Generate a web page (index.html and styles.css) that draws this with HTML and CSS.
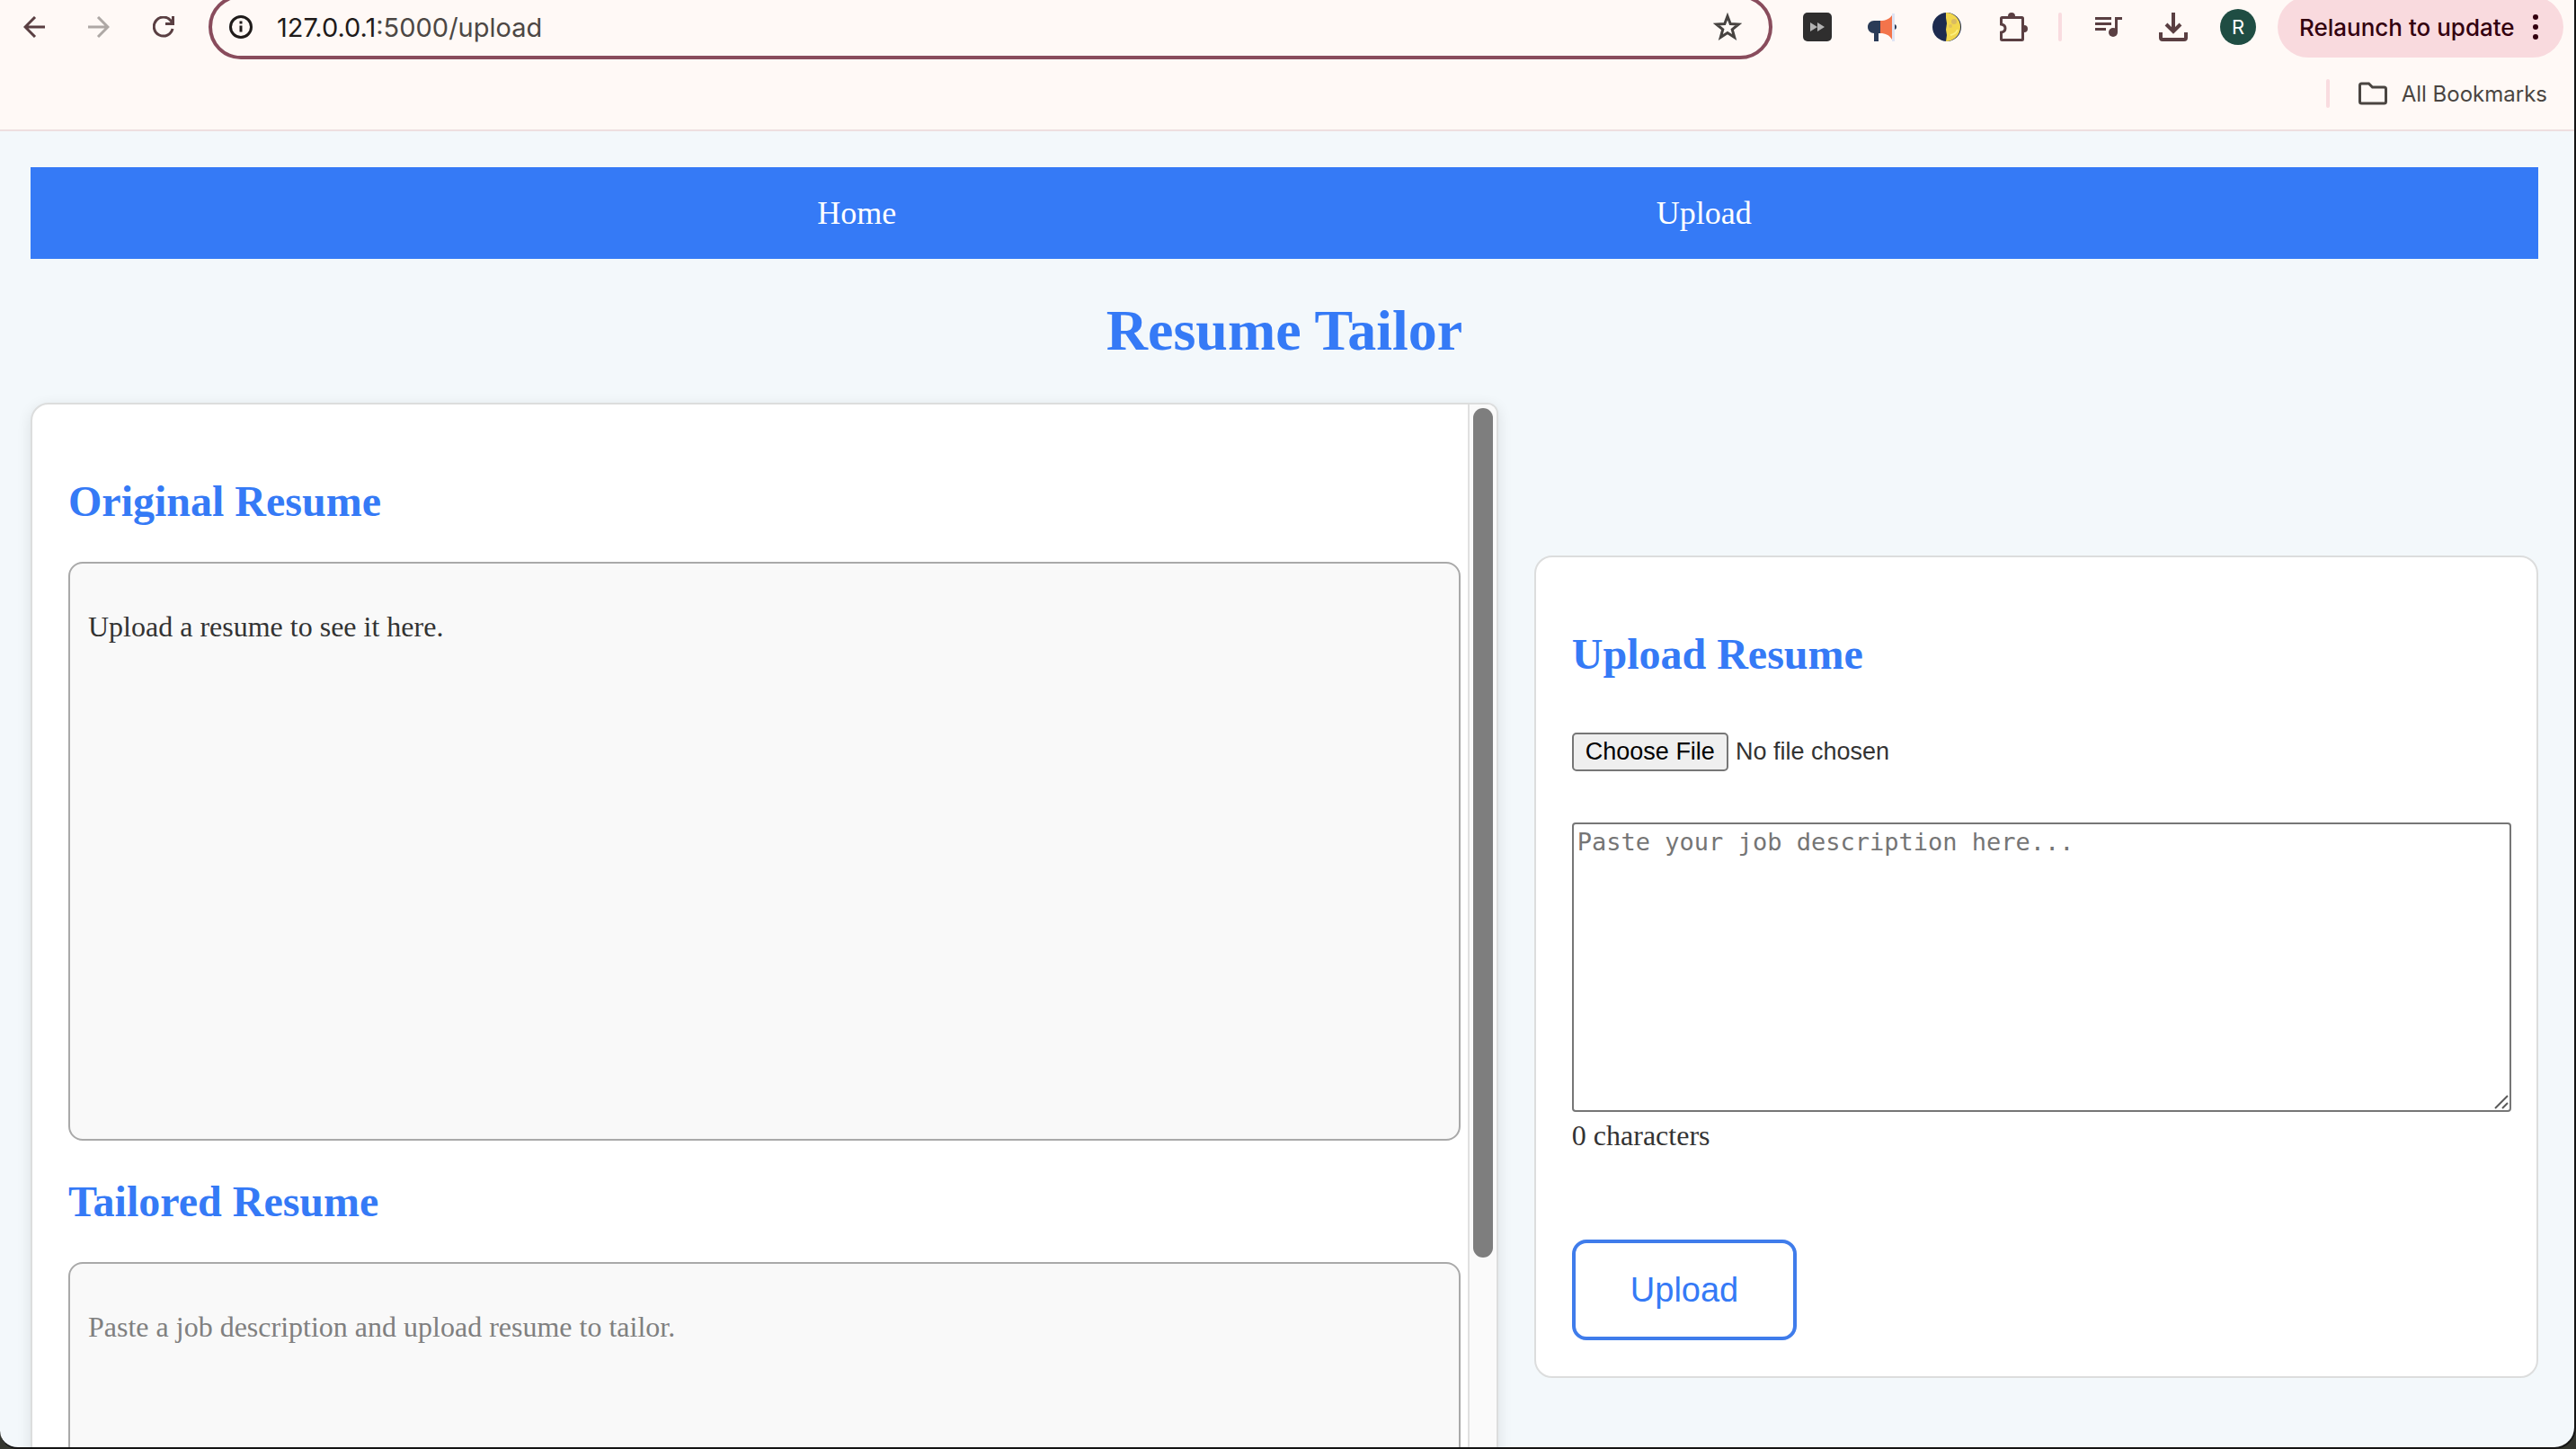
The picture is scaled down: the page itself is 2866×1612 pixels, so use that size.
FILE: index.html
```html
<!DOCTYPE html>
<html lang="en">
<head>
<meta charset="utf-8">
<title>Resume Tailor</title>
<link rel="stylesheet" href="styles.css">
</head>
<body>
<div class="window">
  <header class="chrome">
    <div class="toolbar">
      <button class="tool" aria-label="Back"><svg width="24" height="24" viewBox="0 0 24 24" fill="none" stroke="#5a3f42" stroke-width="3"><path d="M24 12H2M13 1 2 12l11 11"/></svg></button>
      <button class="tool" aria-label="Forward"><svg width="24" height="24" viewBox="0 0 24 24" fill="none" stroke="#aea8a5" stroke-width="3"><path d="M0 12h22M11 1l11 11-11 11"/></svg></button>
      <button class="tool" aria-label="Reload"><svg width="24" height="24" viewBox="0 0 24 24" fill="none" stroke="#5a3f42" stroke-width="3"><path d="M22 14a10.500 10.500 0 1 1-2-9l2 3"/><path d="M22.500 0v8.500H14"/></svg></button>
      <div class="omnibox">
        <svg width="28" height="28" viewBox="0 0 28 28" fill="none" stroke="#1f1b1a" stroke-width="3"><circle cx="14" cy="14" r="11.500"/><path d="M14 12.500v7M14 7.500v3"/></svg>
        <span class="url"><span class="host">127.0.0.1</span>:5000/upload</span>
        <button class="star" aria-label="Bookmark this tab"><svg width="32" height="32" viewBox="0 0 32 32" fill="none" stroke="#474340" stroke-width="3"><path d="M16 4l3.200 8.600 9.200.4-7.200 5.700 2.500 8.900L16 22.500l-7.700 5.100 2.500-8.900L3.600 13l9.200-.4z"/></svg></button>
      </div>
      <div class="extensions">
        <button class="tool" aria-label="Playback speed"><svg width="32" height="32" viewBox="0 0 32 32"><rect width="32" height="32" rx="5" fill="#2f2e2e"/><path d="M8 11l8 5-8 5zM16 11l8 5-8 5z" fill="#b4b4b4"/></svg></button>
        <button class="tool" aria-label="Announcements"><svg width="32" height="32" viewBox="0 0 32 32"><path d="M29 13a3 3 0 0 1 0 6z" fill="#2a3b57"/><path d="M14 9v14h-2v9H7v-9c-4 0-7-3-7-7s3-7 7-7z" fill="#2a3b57"/><path d="M14 9c6 0 10-2 13-6v27c-3-5-7-7-13-7z" fill="#f3744b"/><path d="M27 1h3v31h-3z" fill="#dfe4f4"/></svg></button>
        <button class="tool" aria-label="Dark mode"><svg width="32" height="32" viewBox="0 0 32 32"><circle cx="16" cy="16" r="16" fill="#1d2b4f"/><path d="M15 0a16 16 0 0 1 0 32l1-7-1-6 1-7-1-6z" fill="#f2d74d"/><circle cx="24" cy="10" r="3" fill="#d9bb62"/><circle cx="20" cy="15" r="2" fill="#dfc25e"/><path d="M20 25q6-1 8-6" stroke="#fbf07e" stroke-width="2" fill="none"/></svg></button>
        <button class="tool" aria-label="Extensions"><svg width="36" height="36" viewBox="-4 0 36 36"><path d="M3.500 7.500h22a1 1 0 0 1 1 1v23a1 1 0 0 1-1 1h-22a1 1 0 0 1-1-1V24c6-1 6-8 0-9V8.500a1 1 0 0 1 1-1z" fill="none" stroke="#5a3f42" stroke-width="3"/><path d="M10 6a4 4 0 0 1 8 0zM28 16a4 4 0 0 1 0 8z" fill="#5a3f42"/></svg></button>
      </div>
      <span class="divider"></span>
      <button class="tool" aria-label="Media controls"><svg width="30" height="24" viewBox="0 0 30 24"><path d="M0 1h18v3H0zM0 7h18v3H0zM0 13h12v3H0zM22 1h8v3h-5v14h-3z" fill="#5a3f42"/><circle cx="20" cy="18" r="5" fill="#5a3f42"/></svg></button>
      <button class="tool" aria-label="Downloads"><svg width="32" height="32" viewBox="0 0 32 32" fill="none" stroke="#5a3f42" stroke-width="4"><path d="M16 0v21M8 13l8 8 8-8M2 22v6q0 2 2 2h24q2 0 2-2v-6"/></svg></button>
      <button class="tool" aria-label="Profile"><span class="avatar">R</span></button>
      <button class="relaunch">Relaunch to update<svg width="6" height="30" viewBox="0 0 6 30" fill="#33000f"><circle cx="3" cy="4" r="3"/><circle cx="3" cy="15" r="3"/><circle cx="3" cy="26" r="3"/></svg></button>
    </div>
    <div class="bookmarks">
      <span class="divider"></span>
      <button class="all-bookmarks"><svg width="32" height="26" viewBox="0 0 32 26" fill="none" stroke="#4a4541" stroke-width="3"><path d="M3.500 2h8l4 4h13q2 0 2 2v14q0 2-2 2h-25q-2 0-2-2V4q0-2 2-2z"/></svg>All Bookmarks</button>
    </div>
  </header>
  <div class="page">
    <nav class="nav">
      <a href="#home">Home</a>
      <a href="#upload">Upload</a>
    </nav>
    <h1>Resume Tailor</h1>
    <main class="columns">
      <section class="card resumes">
        <div class="scroll">
          <h2>Original Resume</h2>
          <div class="preview"><p>Upload a resume to see it here.</p></div>
          <h2>Tailored Resume</h2>
          <div class="preview empty"><p>Paste a job description and upload resume to tailor.</p></div>
        </div>
        <div class="track"><div class="thumb"></div></div>
      </section>
      <section class="card upload">
        <h2>Upload Resume</h2>
        <form class="form">
          <input class="file" type="file" aria-label="Resume file">
          <div class="job">
            <textarea class="job-text" aria-label="Job description" placeholder="Paste your job description here..."></textarea>
            <svg class="grip" width="16" height="16" viewBox="0 0 16 16" stroke="#5c5c5c" stroke-width="2"><path d="M1 15 15 1M9 15l6-6"/></svg>
          </div>
          <div class="count">0 characters</div>
          <button class="submit" type="button">Upload</button>
        </form>
      </section>
    </main>
  </div>
</div>
</body>
</html>
```

FILE: styles.css
```css
body {
  margin: 0;
  background: #34362f;
  color: #333;
  font: 32px "Liberation Serif", serif;
}

button {
  border: 0;
  padding: 0;
  background: none;
}

.window {
  box-sizing: border-box;
  display: flex;
  flex-direction: column;
  height: 100vh;
  overflow: hidden;
  border: solid #141414;
  border-width: 0 2px 2px 0;
  border-radius: 0 0 24px 20px;
  background: #f3f8fb;
}

/* Browser bars */
.chrome {
  flex: none;
  overflow: hidden;
  border-bottom: 2px solid #eedfe0;
  background: #fff9f6;
  font-family: Inter, sans-serif;
}

.toolbar {
  display: flex;
  align-items: center;
  height: 72px;
  margin-top: -6px;
  padding: 0 12px 0 2px;
}

.tool {
  display: flex;
  flex: none;
  align-items: center;
  justify-content: center;
  width: 72px;
  height: 72px;
}

.omnibox {
  box-sizing: border-box;
  display: flex;
  flex: 1;
  align-items: center;
  height: 72px;
  margin: 0 14px;
  padding: 0 30px 0 18px;
  border: 4px solid #894c5c;
  border-radius: 36px;
}

.url {
  flex: 1;
  margin-left: 26px;
  color: #4c4744;
  font-size: 29px;
}

.host {
  color: #1f1b1a;
}

.star {
  display: flex;
}

.extensions {
  display: flex;
}

.divider {
  width: 4px;
  height: 32px;
  margin: 0 16px;
  border-radius: 2px;
  background: #f9dce0;
}

.avatar {
  width: 40px;
  height: 40px;
  border-radius: 50%;
  background: #1f4d43;
  color: #fff;
  font: 22px/40px Inter, sans-serif;
  text-align: center;
}

.relaunch {
  display: flex;
  align-items: center;
  justify-content: space-between;
  width: 318px;
  height: 68px;
  margin-left: 8px;
  padding: 0 28px 0 24px;
  border-radius: 34px;
  background: #f9dade;
  color: #33000f;
  font: 500 26px Inter, sans-serif;
}

.bookmarks {
  display: flex;
  align-items: center;
  justify-content: flex-end;
  height: 76px;
  padding: 0 30px 2px 0;
}

.all-bookmarks {
  display: flex;
  align-items: center;
  gap: 16px;
  margin-left: 16px;
  color: #4a4541;
  font: 24px Inter, sans-serif;
}

/* Page */
.page {
  flex: 1;
  min-height: 0;
  padding: 40px 40px 0 34px;
}

.nav {
  display: flex;
  justify-content: space-evenly;
  padding: 30px;
  background: #357af6;
  font-size: 36px;
  line-height: 42px;
}

.nav a {
  color: #fff;
  text-decoration: none;
}

h1,
h2 {
  color: #357af6;
}

h1 {
  margin: 43px 0;
  font-size: 64px;
  line-height: 74px;
  text-align: center;
}

h2 {
  margin: 40px 0;
  font-size: 48px;
  line-height: 55px;
}

.columns {
  display: grid;
  grid-template-columns: 19fr 13fr;
  align-items: center;
  gap: 40px;
}

.card {
  box-sizing: border-box;
  min-width: 0;
  border: 2px solid #dcdddd;
  border-radius: 20px;
  background: #fff;
}

.resumes {
  display: flex;
  max-height: 1255px;
  border-top-right-radius: 12px;
  box-shadow: 0 4px 16px rgba(0, 0, 0, 0.1);
}

.scroll {
  flex: 1;
  padding: 40px 8px 40px 40px;
  overflow-y: auto;
  scrollbar-width: none;
}

.track {
  box-sizing: border-box;
  width: 32px;
  padding: 4px 4px 4px 4px;
  border-left: 2px solid #e0e0e0;
  border-radius: 0 10px 0 0;
  background: #fafafa;
}

.thumb {
  width: 22px;
  height: 76%;
  border-radius: 11px;
  background: #7e7e7e;
}

.preview {
  box-sizing: border-box;
  min-height: 644px;
  padding: 0 20px;
  border: 2px solid #a9a9a9;
  border-radius: 16px;
  background: #f9f9f9;
}

.preview p {
  margin: 52px 0;
  line-height: 37px;
}

.empty {
  color: gray;
}

.upload {
  padding: 40px;
}

.form {
  display: flex;
  flex-direction: column;
  align-items: flex-start;
  padding-top: 20px;
}

.file {
  color: #333;
  font: 27px "Liberation Sans", sans-serif;
}

.file::file-selector-button {
  box-sizing: border-box;
  height: 43px;
  margin-right: 8px;
  padding: 0 13px;
  border: 2px solid #767676;
  border-radius: 5px;
  background: #efefef;
  color: #000;
  font: 27px "Liberation Sans", sans-serif;
}

.job {
  position: relative;
  display: flex;
  width: calc(100% + 12px);
  margin: 57px 0 8px;
}

.job-text {
  flex: 1;
  height: 310px;
  padding: 4px;
  border: 2px solid #767676;
  border-radius: 4px;
  resize: none;
  font: 27px "DejaVu Sans Mono", monospace;
}

.job-text::placeholder {
  color: #757575;
}

.grip {
  position: absolute;
  right: 3px;
  bottom: 3px;
}

.count {
  line-height: 37px;
}

.submit {
  height: 112px;
  margin-top: 97px;
  padding: 0 61px;
  border: 4px solid #3f7ceb;
  border-radius: 16px;
  color: #357af6;
  font: 38px "Liberation Sans", sans-serif;
}
```
